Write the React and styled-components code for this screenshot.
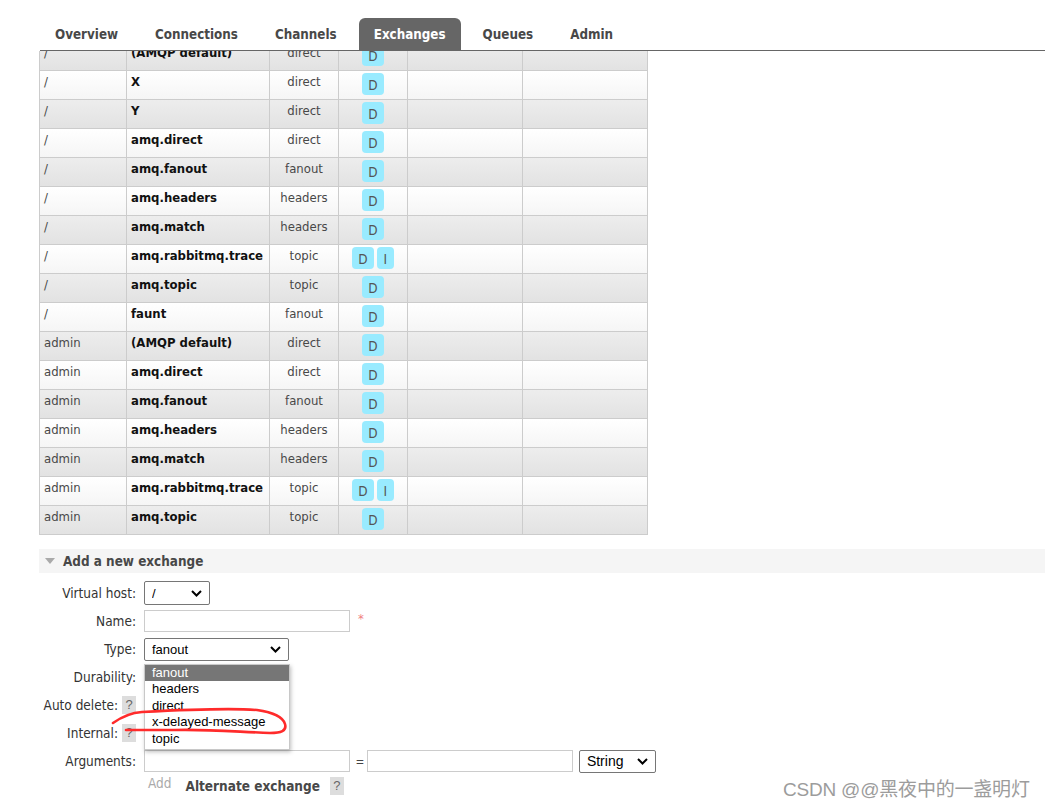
import React from "react";
import styled, { createGlobalStyle } from "styled-components";

const Global = createGlobalStyle`
  html, body { margin: 0; padding: 0; background: #fff; }
  body {
    font-family: "DejaVu Sans Condensed", "DejaVu Sans", Verdana, sans-serif;
    font-stretch: condensed;
    font-size: 13px;
    color: #484848;
  }
  * { box-sizing: border-box; }
`;

const Page = styled.div`
  position: relative;
  width: 1045px;
  height: 807px;
  overflow: hidden;
`;

const TabBar = styled.ul`
  display: flex;
  gap: 7px;
  list-style: none;
  margin: 0 0 0 40px;
  padding: 18px 0 0 0;
  border-bottom: 1px solid #666;
  position: relative;
  z-index: 2;
  background: #fff;
`;

const Tab = styled.li`
  height: 32px;
  line-height: 34px;
  padding: 0 15px;
  font-weight: bold;
  font-size: 13.3px;
  color: ${(p) => (p.$active ? "#fff" : "#484848")};
  background: ${(p) => (p.$active ? "#666" : "transparent")};
  border-radius: 6px 6px 0 0;
`;

const TableClip = styled.div`
  margin-left: 39px;
  width: 609px;
  height: 485px;
  overflow: hidden;
`;

const Table = styled.table`
  border-collapse: separate;
  border-spacing: 0;
  table-layout: fixed;
  width: 609px;
  margin-top: -10px;
  border-left: 1px solid #ccc;
  border-top: 1px solid #ccc;
`;

const Row = styled.tr`
  background: ${(p) =>
    p.$alt
      ? "linear-gradient(#ededed, #e2e2e2)"
      : "linear-gradient(#ffffff, #f5f5f5)"};
`;

const Cell = styled.td`
  height: 29px;
  padding: ${(p) => (p.$badges ? "2px 4px 0" : "3px 4px 0")};
  vertical-align: top;
  line-height: 16px;
  border-right: 1px solid #ccc;
  border-bottom: 1px solid #ccc;
  text-align: ${(p) => (p.$center ? "center" : "left")};
  font-weight: ${(p) => (p.$bold ? "bold" : "normal")};
  color: ${(p) => (p.$bold ? "#111" : "#484848")};
  white-space: nowrap;
  overflow: hidden;
`;

const BadgeRow = styled.div`
  display: flex;
  justify-content: center;
  gap: 3px;
`;

const Badge = styled.span`
  display: inline-block;
  height: 22px;
  line-height: 24px;
  min-width: 17px;
  padding: 0 6px;
  border-radius: 4px;
  background: #99ebff;
  color: #555;
  font-size: 13.5px;
  text-align: center;
`;

const Section = styled.div`
  margin: 13px 0 0 39px;
`;

const SectionHead = styled.div`
  display: flex;
  align-items: center;
  gap: 8px;
  height: 24px;
  padding-left: 6px;
  background: #f5f5f5;
  font-weight: bold;
  font-size: 13.4px;
  color: #484848;
`;

const Form = styled.div`
  display: grid;
  grid-template-columns: 97px auto;
  grid-auto-rows: 28px;
  column-gap: 8px;
  margin-top: 6px;
  align-items: center;
  font-size: 13.5px;
`;

const Label = styled.div`
  display: flex;
  justify-content: flex-end;
  align-items: center;
  gap: 4px;
  white-space: nowrap;
  color: #333;
`;

const Help = styled.span`
  display: inline-block;
  flex: none;
  width: 14px;
  height: 18px;
  line-height: 18px;
  text-align: center;
  background: #ddd;
  color: #666;
  font-family: "Liberation Sans", Arial, sans-serif;
  font-size: 13px;
  font-weight: normal;
`;

const Control = styled.div`
  display: flex;
  align-items: center;
  position: relative;
`;

const TextInput = styled.input`
  width: ${(p) => p.$w}px;
  height: 22px;
  border: 1px solid #ccc;
  padding: 1px 4px;
  font: 13px "Liberation Sans", Arial, sans-serif;
`;

const SelectWrap = styled.div`
  position: relative;
  width: ${(p) => p.$w}px;
  height: ${(p) => p.$h || 23}px;
`;

const Select = styled.select`
  appearance: none;
  width: 100%;
  height: 100%;
  border: 1px solid #767676;
  border-radius: 2px;
  background: #fff;
  padding: 0 0 0 7px;
  font: ${(p) => p.$fs || 13}px "Liberation Sans", Arial, sans-serif;
  color: #000;
`;

const Chevron = styled.svg`
  position: absolute;
  right: 8px;
  top: 50%;
  margin-top: -3px;
  pointer-events: none;
`;

const Required = styled.span`
  color: #f08080;
  font-size: 13px;
  margin-left: 8px;
  margin-top: -6px;
`;

const Equals = styled.span`
  font-family: "Liberation Sans", Arial, sans-serif;
  color: #444;
  margin: 0 3px 0 6px;
`;

const Spacer = styled.span`
  width: ${(p) => p.$w}px;
`;

const DropList = styled.ul`
  position: absolute;
  left: 0;
  top: 26px;
  width: 146px;
  margin: 0;
  padding: 0 0 2px;
  list-style: none;
  background: #fff;
  border: 1px solid #c8c8c8;
  box-shadow: 1px 2px 4px rgba(0, 0, 0, 0.25);
  z-index: 5;
  font: 13px "Liberation Sans", Arial, sans-serif;
`;

const DropItem = styled.li`
  height: 16.5px;
  line-height: 16.5px;
  padding-left: 7px;
  background: ${(p) => (p.$sel ? "#767676" : "transparent")};
  color: ${(p) => (p.$sel ? "#fff" : "#000")};
`;

const AddLink = styled.span`
  color: #aaa;
  margin-left: 4px;
  margin-top: -12px;
`;

const AltLabel = styled.span`
  font-weight: bold;
  font-size: 13.5px;
  color: #484848;
  margin-left: 14px;
  display: flex;
  align-items: center;
  gap: 10px;
  margin-top: -6px;
`;

const Annotation = styled.svg`
  position: absolute;
  left: 0;
  top: 0;
  pointer-events: none;
  z-index: 10;
`;

const Watermark = styled.div`
  position: absolute;
  left: 783px;
  top: 774px;
  font-family: "Liberation Sans", "Noto Sans CJK SC", sans-serif;
  font-size: 19px;
  color: #9c9c9c;
  white-space: nowrap;
  letter-spacing: -0.2px;
`;

const rows = [
  ["/", "(AMQP default)", "direct", ["D"]],
  ["/", "X", "direct", ["D"]],
  ["/", "Y", "direct", ["D"]],
  ["/", "amq.direct", "direct", ["D"]],
  ["/", "amq.fanout", "fanout", ["D"]],
  ["/", "amq.headers", "headers", ["D"]],
  ["/", "amq.match", "headers", ["D"]],
  ["/", "amq.rabbitmq.trace", "topic", ["D", "I"]],
  ["/", "amq.topic", "topic", ["D"]],
  ["/", "faunt", "fanout", ["D"]],
  ["admin", "(AMQP default)", "direct", ["D"]],
  ["admin", "amq.direct", "direct", ["D"]],
  ["admin", "amq.fanout", "fanout", ["D"]],
  ["admin", "amq.headers", "headers", ["D"]],
  ["admin", "amq.match", "headers", ["D"]],
  ["admin", "amq.rabbitmq.trace", "topic", ["D", "I"]],
  ["admin", "amq.topic", "topic", ["D"]],
];

const tabs = ["Overview", "Connections", "Channels", "Exchanges", "Queues", "Admin"];

const ChevronIcon = () => (
  <Chevron width="11" height="7" viewBox="0 0 11 7">
    <path d="M1 1 L5.5 5.5 L10 1" fill="none" stroke="#000" strokeWidth="2" />
  </Chevron>
);

const FakeSelect = ({ w, h, value, fs }) => (
  <SelectWrap $w={w} $h={h}>
    <Select $fs={fs} defaultValue={value}>
      <option>{value}</option>
    </Select>
    <ChevronIcon />
  </SelectWrap>
);

export default function App() {
  return (
    <Page>
      <Global />
      <TabBar>
        {tabs.map((t) => (
          <Tab key={t} $active={t === "Exchanges"}>
            {t}
          </Tab>
        ))}
      </TabBar>

      <TableClip>
        <Table>
          <colgroup>
            <col style={{ width: 87 }} />
            <col style={{ width: 143 }} />
            <col style={{ width: 69 }} />
            <col style={{ width: 69 }} />
            <col style={{ width: 115 }} />
            <col style={{ width: 125 }} />
          </colgroup>
          <tbody>
            {rows.map((r, i) => (
              <Row key={i} $alt={i % 2 === 0}>
                <Cell>{r[0]}</Cell>
                <Cell $bold>{r[1]}</Cell>
                <Cell $center>{r[2]}</Cell>
                <Cell $badges>
                  <BadgeRow>
                    {r[3].map((b) => (
                      <Badge key={b}>{b}</Badge>
                    ))}
                  </BadgeRow>
                </Cell>
                <Cell />
                <Cell />
              </Row>
            ))}
          </tbody>
        </Table>
      </TableClip>

      <Section>
        <SectionHead>
          <svg width="10" height="6" viewBox="0 0 10 6">
            <path d="M0 0 H10 L5 6 Z" fill="#aaa" />
          </svg>
          Add a new exchange
        </SectionHead>
        <Form>
          <Label>Virtual host:</Label>
          <Control>
            <FakeSelect w={66} h={24} value="/" />
          </Control>

          <Label>Name:</Label>
          <Control>
            <TextInput $w={206} />
            <Required>*</Required>
          </Control>

          <Label>Type:</Label>
          <Control>
            <FakeSelect w={145} h={23} value="fanout" />
            <DropList>
              <DropItem $sel>fanout</DropItem>
              <DropItem>headers</DropItem>
              <DropItem>direct</DropItem>
              <DropItem>x-delayed-message</DropItem>
              <DropItem>topic</DropItem>
            </DropList>
          </Control>

          <Label>Durability:</Label>
          <Control>
            <FakeSelect w={100} h={23} value="Durable" />
          </Control>

          <Label>
            Auto delete: <Help>?</Help>
          </Label>
          <Control>
            <FakeSelect w={60} h={23} value="No" />
          </Control>

          <Label>
            Internal: <Help>?</Help>
          </Label>
          <Control>
            <FakeSelect w={60} h={23} value="No" />
          </Control>

          <Label>Arguments:</Label>
          <Control>
            <TextInput $w={206} />
            <Equals>=</Equals>
            <TextInput $w={206} />
            <Spacer $w={6} />
            <FakeSelect w={77} h={23} value="String" fs={14} />
          </Control>

          <span />
          <Control>
            <AddLink>Add</AddLink>
            <AltLabel>
              Alternate exchange <Help>?</Help>
            </AltLabel>
          </Control>
        </Form>
      </Section>

      <Annotation width="1045" height="807" viewBox="0 0 1045 807">
        <path
          d="M113 723 C120 718 128 713 142 712 C180 710 230 708 257 710 C272 712 283 717 285 724 C287 731 281 733 270 733 C240 732 205 729 175 730 C155 730 138 730 126 730"
          fill="none"
          stroke="#ff2b2b"
          strokeWidth="2.6"
          strokeLinecap="round"
          strokeLinejoin="round"
        />
      </Annotation>

      <Watermark>CSDN @@黑夜中的一盏明灯</Watermark>
    </Page>
  );
}
